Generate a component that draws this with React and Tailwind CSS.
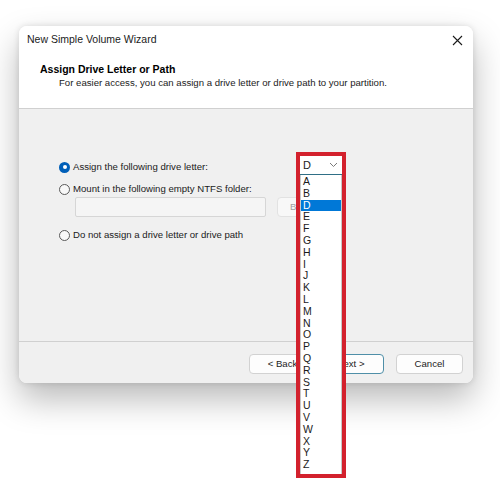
import React from 'react';

const LETTERS = ['A', 'B', 'D', 'E', 'F', 'G', 'H', 'I', 'J', 'K', 'L', 'M', 'N', 'O', 'P', 'Q', 'R', 'S', 'T', 'U', 'V', 'W', 'X', 'Y', 'Z'];

function Radio({ checked, label }) {
  return (
    <div className="flex items-center h-[14px]">
      {checked ? (
        <span className="w-[11px] h-[11px] rounded-full bg-[#005fb8] flex items-center justify-center">
          <span className="w-[4px] h-[4px] rounded-full bg-white" />
        </span>
      ) : (
        <span className="w-[11px] h-[11px] rounded-full border border-[#5a5a5a] bg-[#f8f8f8]" />
      )}
      <span className="ml-[3px] text-[9.6px] text-[#1b1b1b] leading-[14px]">{label}</span>
    </div>
  );
}

function Button({ children, primary, className = '' }) {
  return (
    <button
      className={`block h-[20px] w-[67px] rounded-[4px] text-[9.6px] leading-[18px] text-[#1b1b1b] bg-[#fdfdfd] border ${primary ? 'border-[#4f8fa8]' : 'border-[#d2d2d2]'} ${className}`}
    >
      {children}
    </button>
  );
}

function LetterDropdown() {
  // overlay: drive letter combo opened, highlighted by a red frame
  return (
    <div className="absolute left-[277px] top-[126px] w-[50px] h-[326px] border-[4px] border-[#d3212d] bg-white flex flex-col">
      <div className="h-[19px] flex items-center justify-between pl-[3px] pr-[4px] border-b border-[#2f6f86]">
        <span className="text-[11px] text-[#1b1b1b]">D</span>
        <svg width="9" height="6" viewBox="0 0 9 6" fill="none">
          <path d="M1 1l3.5 3.5L8 1" stroke="#7a7a7a" strokeWidth="1" />
        </svg>
      </div>
      <div className="flex-1 border-x border-[#c8c8c8] pt-[1px]">
        {LETTERS.map(l => (
          <div
            key={l}
            className={`h-[11.8px] leading-[11.8px] pl-[2px] text-[10.5px] ${l === 'D' ? 'bg-[#0078d7] text-white' : 'text-[#1b1b1b]'}`}
          >
            {l}
          </div>
        ))}
      </div>
    </div>
  );
}

export default function App() {
  return (
    <div className="w-[500px] h-[484px] bg-white pt-[26px] pl-[19px] overflow-hidden" style={{ fontFamily: '"Liberation Sans", Arial, sans-serif' }}>
      <div className="relative w-[454px] h-[357px] rounded-[8px] flex flex-col shadow-[0_16px_34px_rgba(0,0,0,0.28),0_0_6px_rgba(0,0,0,0.12)]">
        <div className="bg-white rounded-t-[8px] h-[83px] border-b border-[#d0d0d0]">
          <div className="h-[28px] flex items-center justify-between pl-[8px] pr-[8px]">
            <span className="text-[10.5px] text-[#1b1b1b]">New Simple Volume Wizard</span>
            <svg width="11" height="11" viewBox="0 0 11 11" className="mr-[2px]">
              <path d="M1 1l9 9M10 1l-9 9" stroke="#1b1b1b" strokeWidth="1.1" />
            </svg>
          </div>
          <div className="mt-[9px] pl-[21px] text-[10.5px] font-bold leading-[12px] text-black">Assign Drive Letter or Path</div>
          <div className="mt-[2px] pl-[40px] text-[9.6px] leading-[12px] text-[#1b1b1b]">
            For easier access, you can assign a drive letter or drive path to your partition.
          </div>
        </div>

        <div className="flex-1 bg-[#f0f0f0] border-b border-[#d0d0d0] pl-[40px] pt-[51px] flex flex-col">
          <Radio checked label="Assign the following drive letter:" />
          <div className="mt-[8px]">
            <Radio label="Mount in the following empty NTFS folder:" />
          </div>
          <div className="mt-[1px] ml-[16px] flex gap-[11px]">
            <div className="w-[191px] h-[20px] bg-[#f5f5f5] border border-[#d6d6d6] rounded-[2px]" />
            <div className="w-[66px] h-[20px] bg-[#f8f8f8] border border-[#e2e2e2] rounded-[4px] text-[9.6px] text-[#a0a0a0] flex items-center justify-center">
              Browse...
            </div>
          </div>
          <div className="mt-[11px]">
            <Radio label="Do not assign a drive letter or drive path" />
          </div>
        </div>

        <div className="h-[41px] bg-[#f0f0f0] rounded-b-[8px] flex items-start justify-end pt-[12px] pr-[10px]">
          <Button>&lt; Back</Button>
          <Button primary className="ml-[1px]">Next &gt;</Button>
          <Button className="ml-[12px] w-[66px]">Cancel</Button>
        </div>

        <LetterDropdown />
      </div>
    </div>
  );
}
